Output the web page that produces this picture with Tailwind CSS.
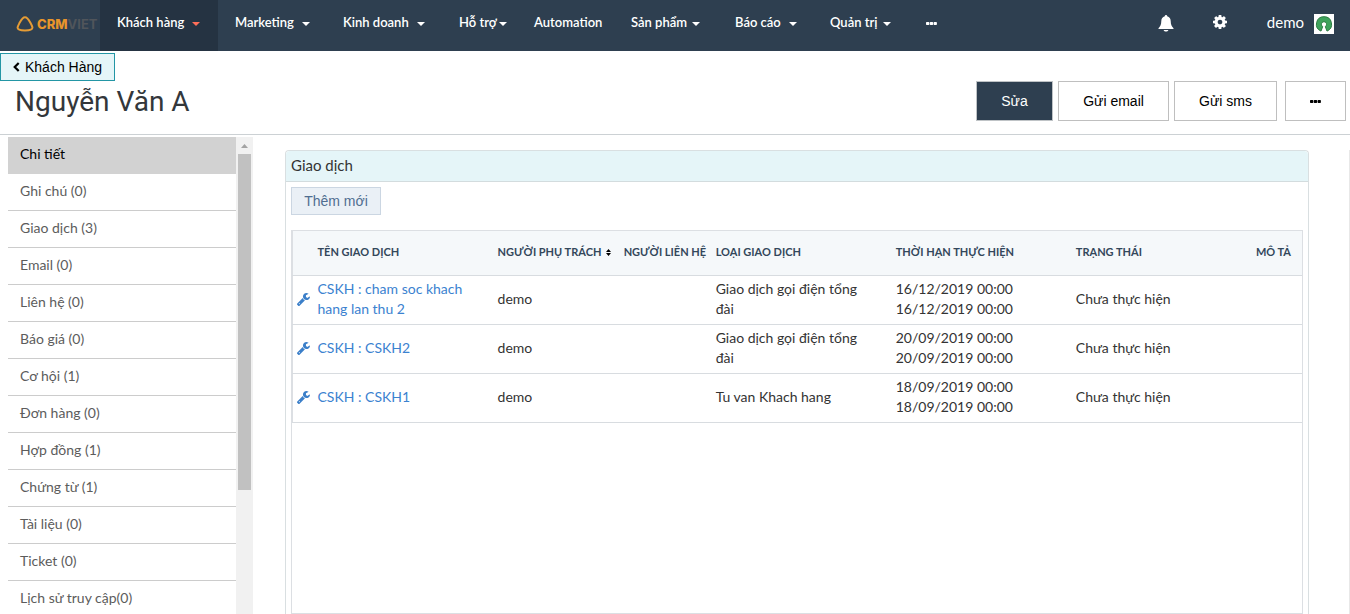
<!DOCTYPE html>
<html lang="vi">
<head>
    <meta charset="UTF-8">
    <meta name="viewport" content="width=device-width, initial-scale=1.0">
    <title>Nguyễn Văn A - Khách hàng</title>
    <script src="https://cdn.jsdelivr.net/npm/@tailwindcss/browser@4"></script>
</head>
<body class="h-screen flex flex-col overflow-hidden bg-white text-[#333] font-[Lato,'Noto_Sans',sans-serif]">
    <!-- Shared icons -->
    <svg class="hidden">
        <symbol id="caret" viewBox="0 0 8 4"><path d="M0 0h8L4 4z" fill="currentColor"/></symbol>
        <symbol id="dots" viewBox="0 0 11 3"><path d="M.7 0h1.900q.7 0 .7.7v1.600q0 .7-.7.7H.7Q0 3 0 2.300V.7Q0 0 .7 0zM4.500 0h1.900q.7 0 .7.7v1.600q0 .7-.7.7H4.500q-.7 0-.7-.7V.7q0-.7.7-.7zM8.300 0h1.900q.7 0 .7.7v1.600q0 .7-.7.7H8.300q-.7 0-.7-.7V.7q0-.7.7-.7z" fill="currentColor"/></symbol>
        <symbol id="wrench" viewBox="0 0 1641 1643"><path d="M363 1344q0-26-19-45t-45-19-45 19-19 45 19 45 45 19 45-19 19-45zm644-420l-682 682q-37 37-90 37-52 0-91-37L38 1498q-38-36-38-90 0-53 38-91l681-681q39 98 114.500 173.500T1007 924zm634-435q0 39-23 106-47 134-164.500 217.500T1195 896q-185 0-316.500-131.500T747 448t131.500-316.500T1195 0q58 0 121.500 16.500T1424 63q16 11 16 28t-16 28l-293 169v224l193 107q5-3 79-48.500t135.500-81T1609 454q15 0 23.500 10t8.500 25z" fill="currentColor"/></symbol>
    </svg>

    <!-- Navigation -->
    <nav class="h-[51px] shrink-0 flex bg-[#2e3f50] text-white text-[13px] leading-5 font-semibold">
        <a href="#" class="w-[100px] shrink-0 flex items-center pl-4 pb-1 overflow-hidden">
            <svg class="w-[18px] h-4 shrink-0 mr-[3px]" viewBox="0 0 18 16"><path d="M9 1.300C6.300 1.300 5.300 3.700 3.200 7.600 1.200 11.300.8 12.700 3.200 13.700c2.300 1.100 9.300 1.100 11.600 0 2.400-1 2-2.400 0-6.100C12.700 3.700 11.700 1.300 9 1.300z" fill="none" stroke="#e59c35" stroke-width="2"/></svg>
            <span class="font-[Inter,sans-serif] font-extrabold text-[13px] text-[#e8952b]">CRM<span class="font-bold text-[#50555b]">VIET</span></span>
        </a>
        <div class="flex">
            <a href="#" class="w-[118px] flex items-center pl-[17px] pb-2 bg-[#253342]">Khách hàng<svg class="w-2 h-1 ml-2 mt-1 text-[#ff6f59]"><use href="#caret"/></svg></a>
            <a href="#" class="w-[108px] flex items-center pl-[17px] pb-2">Marketing<svg class="w-2 h-1 ml-2 mt-1"><use href="#caret"/></svg></a>
            <a href="#" class="w-[116px] flex items-center pl-[17px] pb-2">Kinh doanh<svg class="w-2 h-1 ml-2 mt-1"><use href="#caret"/></svg></a>
            <a href="#" class="w-[75px] flex items-center pl-[17px] pb-2">Hỗ trợ<svg class="w-2 h-1 ml-[2px] mt-1"><use href="#caret"/></svg></a>
            <a href="#" class="w-[97px] flex items-center pl-[17px] pb-2">Automation</a>
            <a href="#" class="w-[104px] flex items-center pl-[17px] pb-2">Sản phẩm<svg class="w-2 h-1 ml-[5px] mt-1"><use href="#caret"/></svg></a>
            <a href="#" class="w-[95px] flex items-center pl-[17px] pb-2">Báo cáo<svg class="w-2 h-1 ml-2 mt-1"><use href="#caret"/></svg></a>
            <a href="#" class="w-[96px] flex items-center pl-[17px] pb-2">Quản trị<svg class="w-2 h-1 ml-[5px] mt-1"><use href="#caret"/></svg></a>
            <a href="#" aria-label="Thêm" class="flex items-center pl-[17px] pb-[5px]"><svg class="w-[11px] h-[3px]"><use href="#dots"/></svg></a>
        </div>
        <div class="ml-auto pr-4 pb-2 flex items-center">
            <button aria-label="Thông báo" class="mr-[39px] mt-1">
                <svg class="w-4 h-[17px]" viewBox="0 0 16 17"><path d="M8 0c.8 0 1.200.6 1.200 1.300C11.500 1.900 12.600 3.800 12.700 6c.1 3.600.9 5.400 2.800 7.200v.8H.5v-.8C2.400 11.400 3.200 9.600 3.300 6c.1-2.200 1.200-4.100 3.500-4.700C6.800.6 7.200 0 8 0zM5.600 15h4.800c-.4 1-1.300 1.600-2.400 1.600S6 16 5.600 15z" fill="#fff"/></svg>
            </button>
            <button aria-label="Cài đặt" class="mr-10">
                <svg class="w-[14px] h-[14px]" viewBox="0 0 1536 1536"><path d="M1024 768q0-106-75-181t-181-75-181 75-75 181 75 181 181 75 181-75 75-181zm512-109v222q0 12-8 23t-20 13l-185 28q-19 54-39 91 35 50 107 138 10 12 10 25t-9 23q-27 37-99 108t-94 71q-12 0-26-9l-138-108q-44 23-91 38-16 136-29 186-7 28-36 28H657q-14 0-24.500-8.500T621 1506l-28-184q-49-16-90-37l-141 107q-10 9-25 9-14 0-25-11-126-114-165-168-7-10-7-23 0-12 8-23 15-21 51-66.500t54-70.500q-27-50-41-99L29 913q-13-2-21-12.500T0 877V655q0-12 8-23t19-13l186-28q14-46 39-92-40-57-107-138-10-12-10-24 0-10 9-23 26-36 98.500-107.500T337 135q13 0 26 10l138 107q44-23 91-38 16-136 29-186 7-28 36-28h222q14 0 24.500 8.500T915 30l28 184q49 16 90 37l142-107q9-9 24-9 13 0 25 10 129 119 165 170 7 8 7 22 0 12-8 23-15 21-51 66.500t-54 70.500q26 50 41 98l183 28q13 2 21 12.500t8 23.500z" fill="#fff"/></svg>
            </button>
            <a href="#" class="flex items-center text-[15px] font-normal">demo
                <svg class="w-5 h-5 ml-[10px] mt-1" viewBox="0 0 20 20"><path fill="#fff" d="M0 0h20v20H0z"/><path d="M10 2.700a7.500 7.500 0 0 1 3 14.400L11.300 12.600a2.600 2.600 0 1 0-2.600 0L7 17.100A7.500 7.500 0 0 1 10 2.700z" fill="#3fa35c" stroke="#2c7c42"/></svg>
            </a>
        </div>
    </nav>

    <!-- Page header -->
    <header class="h-[84px] shrink-0 flex justify-between border-b border-[#ccd1d4] font-['Liberation_Sans',Arial,sans-serif]">
        <div class="pt-[2px]">
            <a href="#" class="w-[115px] h-7 flex items-center pl-3 border border-[#2396a5] bg-[#e5f5f8] text-black text-sm">
                <svg class="w-[7px] h-[10px] mr-[5px]" viewBox="0 0 7 10"><path d="M5.700 1L1.700 5l4 4" fill="none" stroke="#000" stroke-width="2.200"/></svg>Khách Hàng</a>
            <h1 class="pl-[15px] mt-[5px] text-[28px] leading-8 text-[#33373b] font-[Roboto,sans-serif]">Nguyễn Văn A</h1>
        </div>
        <div class="flex pt-[30px] pr-1 text-sm text-black">
            <button class="w-[77px] h-10 border border-[#bfc3c6] bg-[#2e3f50] text-white">Sửa</button>
            <button class="w-[111px] h-10 ml-[5px] border border-[#bfbfbf]">Gửi email</button>
            <button class="w-[103px] h-10 ml-[5px] border border-[#bfbfbf]">Gửi sms</button>
            <button aria-label="Thêm" class="w-[61px] h-10 ml-2 border border-[#bfbfbf] flex items-center justify-center"><svg class="w-[11px] h-[3px]"><use href="#dots"/></svg></button>
        </div>
    </header>

    <div class="flex-1 min-h-0 flex">
        <!-- Sidebar -->
        <aside class="w-[253px] shrink-0 pl-2 pt-[2px] flex overflow-hidden text-sm text-[#5c5c5c]">
            <ul class="flex-1">
                <li class="h-[37px] border-b border-[#d2d2d2] bg-[#d2d2d2] text-black"><a href="#" class="block px-3 leading-[34px]">Chi tiết</a></li>
                <li class="h-[37px] border-b border-[#ccc]"><a href="#" class="block px-3 leading-[34px]">Ghi chú (0)</a></li>
                <li class="h-[37px] border-b border-[#ccc]"><a href="#" class="block px-3 leading-[34px]">Giao dịch (3)</a></li>
                <li class="h-[37px] border-b border-[#ccc]"><a href="#" class="block px-3 leading-[34px]">Email (0)</a></li>
                <li class="h-[37px] border-b border-[#ccc]"><a href="#" class="block px-3 leading-[34px]">Liên hệ (0)</a></li>
                <li class="h-[37px] border-b border-[#ccc]"><a href="#" class="block px-3 leading-[34px]">Báo giá (0)</a></li>
                <li class="h-[37px] border-b border-[#ccc]"><a href="#" class="block px-3 leading-[34px]">Cơ hội (1)</a></li>
                <li class="h-[37px] border-b border-[#ccc]"><a href="#" class="block px-3 leading-[34px]">Đơn hàng (0)</a></li>
                <li class="h-[37px] border-b border-[#ccc]"><a href="#" class="block px-3 leading-[34px]">Hợp đồng (1)</a></li>
                <li class="h-[37px] border-b border-[#ccc]"><a href="#" class="block px-3 leading-[34px]">Chứng từ (1)</a></li>
                <li class="h-[37px] border-b border-[#ccc]"><a href="#" class="block px-3 leading-[34px]">Tài liệu (0)</a></li>
                <li class="h-[37px] border-b border-[#ccc]"><a href="#" class="block px-3 leading-[34px]">Ticket (0)</a></li>
                <li class="h-[37px] border-b border-[#ccc]"><a href="#" class="block px-3 leading-[34px]">Lịch sử truy cập(0)</a></li>
            </ul>
            <!-- Scroll track -->
            <div class="w-[17px] bg-[#f1f1f1] flex flex-col items-center">
                <svg class="w-[7px] h-[17px] shrink-0 text-[#a3a3a3]" viewBox="0 0 7 17"><path d="M0 11h7L3.500 7z" fill="currentColor"/></svg>
                <div class="w-[13px] h-[336px] bg-[#c1c1c1]"></div>
            </div>
        </aside>

        <!-- Deals -->
        <main class="flex-1 min-w-0 mt-[15px] pl-8 pr-10 border-r border-[#e8e8e8] flex">
            <section class="flex-1 min-w-0 flex flex-col border border-b-0 border-[#d9dfe1] rounded-t">
                <h2 class="h-[31px] shrink-0 px-[5px] border-b border-[#d3dcde] bg-[#e5f5f8] text-[15px] leading-7 rounded-t">Giao dịch</h2>
                <div class="flex-1 min-h-0 flex flex-col items-start p-[5px] pb-0">
                    <button class="w-[90px] h-7 shrink-0 border border-[#cbd6e2] bg-[#eaf0f6] text-sm text-[#506e91] font-['Liberation_Sans',Arial,sans-serif]">Thêm mới</button>
                    <div class="w-full flex-1 min-h-0 mt-[15px] border border-[#dcdfe3]">
                        <table class="w-full table-fixed border-l border-[#dcdfe3] text-sm leading-5 text-left">
                            <colgroup>
                                <col class="w-[19px]">
                                <col class="w-[180px]">
                                <col class="w-[126px]">
                                <col class="w-[92px]">
                                <col class="w-[180px]">
                                <col class="w-[180px]">
                                <col class="w-[180px]">
                                <col class="w-[52px]">
                            </colgroup>
                            <thead>
                                <tr class="h-11 bg-[#f5f8fa] border-b border-[#d8dce0] text-[11px] text-[#33475b] whitespace-nowrap">
                                    <th></th>
                                    <th class="pl-[6px] pb-[2px]">TÊN GIAO DỊCH</th>
                                    <th class="pl-[6px] pb-[2px]">NGƯỜI PHỤ TRÁCH <svg class="inline w-[5px] h-[7px] ml-[2px]" viewBox="0 0 5 7"><path d="M0 3h5L2.500 0zM0 4h5L2.500 7z" fill="#000"/></svg></th>
                                    <th class="pl-[6px] pb-[2px]">NGƯỜI LIÊN HỆ</th>
                                    <th class="pl-[6px] pb-[2px]">LOẠI GIAO DỊCH</th>
                                    <th class="pl-[6px] pb-[2px]">THỜI HẠN THỰC HIỆN</th>
                                    <th class="pl-[6px] pb-[2px]">TRẠNG THÁI</th>
                                    <th class="pl-[6px] pb-[2px]">MÔ TẢ</th>
                                </tr>
                            </thead>
                            <tbody>
                                <tr class="h-[49px] border-b border-[#d8dce0]">
                                    <td class="pl-1"><svg class="w-[13px] h-[13px] text-[#3b7fc9]"><use href="#wrench"/></svg></td>
                                    <td class="px-[6px] pb-[2px]"><a href="#" class="text-[#3b82d0]">CSKH : cham soc khach hang lan thu 2</a></td>
                                    <td class="px-[6px] pb-[2px]">demo</td>
                                    <td></td>
                                    <td class="pl-[6px] pr-5 pb-[2px]">Giao dịch gọi điện tổng đài</td>
                                    <td class="px-[6px] pb-[2px]">16/12/2019 00:00<br>16/12/2019 00:00</td>
                                    <td class="px-[6px] pb-[2px]">Chưa thực hiện</td>
                                    <td></td>
                                </tr>
                                <tr class="h-[49px] border-b border-[#d8dce0]">
                                    <td class="pl-1"><svg class="w-[13px] h-[13px] text-[#3b7fc9]"><use href="#wrench"/></svg></td>
                                    <td class="px-[6px] pb-[2px]"><a href="#" class="text-[#3b82d0]">CSKH : CSKH2</a></td>
                                    <td class="px-[6px] pb-[2px]">demo</td>
                                    <td></td>
                                    <td class="pl-[6px] pr-5 pb-[2px]">Giao dịch gọi điện tổng đài</td>
                                    <td class="px-[6px] pb-[2px]">20/09/2019 00:00<br>20/09/2019 00:00</td>
                                    <td class="px-[6px] pb-[2px]">Chưa thực hiện</td>
                                    <td></td>
                                </tr>
                                <tr class="h-[49px] border-b border-[#d8dce0]">
                                    <td class="pl-1"><svg class="w-[13px] h-[13px] text-[#3b7fc9]"><use href="#wrench"/></svg></td>
                                    <td class="px-[6px] pb-[2px]"><a href="#" class="text-[#3b82d0]">CSKH : CSKH1</a></td>
                                    <td class="px-[6px] pb-[2px]">demo</td>
                                    <td></td>
                                    <td class="pl-[6px] pr-5 pb-[2px]">Tu van Khach hang</td>
                                    <td class="px-[6px] pb-[2px]">18/09/2019 00:00<br>18/09/2019 00:00</td>
                                    <td class="px-[6px] pb-[2px]">Chưa thực hiện</td>
                                    <td></td>
                                </tr>
                            </tbody>
                        </table>
                    </div>
                </div>
            </section>
        </main>
    </div>
</body>
</html>
